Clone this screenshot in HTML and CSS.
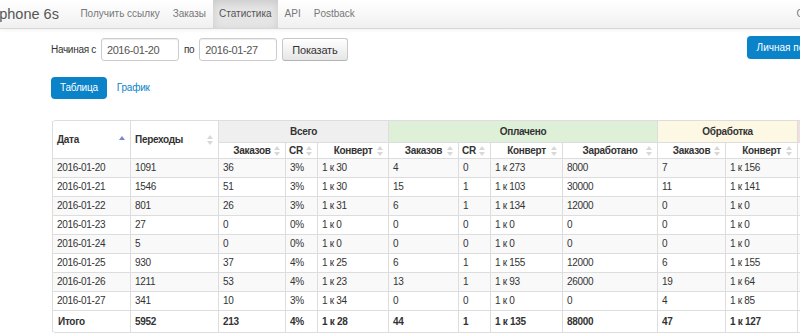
FILE: index.html
```html
<!DOCTYPE html>
<html lang="ru">
<head>
  <meta charset="UTF-8">
  <meta name="viewport" content="width=device-width, initial-scale=1.0">
  <title>Статистика</title>
  <link rel="stylesheet" href="styles.css">
</head>
<body>
  <div class="page">
    <header class="navbar">
      <div class="navbar-inner">
        <a class="brand" href="#">iphone 6s</a>
        <ul class="nav">
          <li><a href="#">Получить ссылку</a></li>
          <li><a href="#">Заказы</a></li>
          <li class="active"><a href="#">Статистика</a></li>
          <li><a href="#">API</a></li>
          <li><a href="#">Postback</a></li>
        </ul>
        <a class="nav-user" href="#">Сергей</a>
      </div>
    </header>

    <main class="content">
      <div class="toolbar">
        <form class="filter">
          <label for="dateFrom">Начиная с</label>
          <input type="text" id="dateFrom" value="2016-01-20">
          <label for="dateTo">по</label>
          <input type="text" id="dateTo" value="2016-01-27">
          <button type="button" class="btn">Показать</button>
        </form>
        <a class="btn-primary cabinet" href="#">Личная подписка</a>
      </div>

      <ul class="tabs">
        <li class="active"><a href="#">Таблица</a></li>
        <li><a href="#">График</a></li>
      </ul>

      <table class="stats">
        <colgroup>
          <col class="w-date"><col class="w-clicks">
          <col class="w-orders"><col class="w-cr"><col class="w-conv">
          <col class="w-orders2"><col class="w-cr"><col class="w-conv2"><col class="w-earned">
          <col class="w-orders3"><col class="w-conv2">
          <col class="w-orders2"><col class="w-conv2">
        </colgroup>
        <thead>
          <tr>
            <th rowspan="2" class="sortable left">Дата
              <svg class="sort" width="6" height="10" viewBox="0 0 6 10"><path class="asc" d="M3 1L6 5H0Z"/></svg>
            </th>
            <th rowspan="2" class="sortable left">Переходы
              <svg class="sort" width="6" height="10" viewBox="0 0 6 10"><path d="M3 0L6 4H0Z"/><path d="M0 6H6L3 10Z"/></svg>
            </th>
            <th colspan="3" class="group group-all">Всего</th>
            <th colspan="4" class="group group-paid">Оплачено</th>
            <th colspan="2" class="group group-wait">Обработка</th>
            <th colspan="2" class="group group-cancel">Отменено</th>
          </tr>
          <tr class="sub">
            <th class="sortable">Заказов<svg class="sort" width="6" height="10" viewBox="0 0 6 10"><path d="M3 0L6 4H0Z"/><path d="M0 6H6L3 10Z"/></svg></th>
            <th class="sortable cr">CR<svg class="sort" width="6" height="10" viewBox="0 0 6 10"><path d="M3 0L6 4H0Z"/><path d="M0 6H6L3 10Z"/></svg></th>
            <th class="sortable">Конверт<svg class="sort" width="6" height="10" viewBox="0 0 6 10"><path d="M3 0L6 4H0Z"/><path d="M0 6H6L3 10Z"/></svg></th>
            <th class="sortable">Заказов<svg class="sort" width="6" height="10" viewBox="0 0 6 10"><path d="M3 0L6 4H0Z"/><path d="M0 6H6L3 10Z"/></svg></th>
            <th class="sortable cr">CR<svg class="sort" width="6" height="10" viewBox="0 0 6 10"><path d="M3 0L6 4H0Z"/><path d="M0 6H6L3 10Z"/></svg></th>
            <th class="sortable">Конверт<svg class="sort" width="6" height="10" viewBox="0 0 6 10"><path d="M3 0L6 4H0Z"/><path d="M0 6H6L3 10Z"/></svg></th>
            <th class="sortable">Заработано<svg class="sort" width="6" height="10" viewBox="0 0 6 10"><path d="M3 0L6 4H0Z"/><path d="M0 6H6L3 10Z"/></svg></th>
            <th class="sortable">Заказов<svg class="sort" width="6" height="10" viewBox="0 0 6 10"><path d="M3 0L6 4H0Z"/><path d="M0 6H6L3 10Z"/></svg></th>
            <th class="sortable">Конверт<svg class="sort" width="6" height="10" viewBox="0 0 6 10"><path d="M3 0L6 4H0Z"/><path d="M0 6H6L3 10Z"/></svg></th>
            <th class="sortable">Заказов<svg class="sort" width="6" height="10" viewBox="0 0 6 10"><path d="M3 0L6 4H0Z"/><path d="M0 6H6L3 10Z"/></svg></th>
            <th class="sortable">Конверт<svg class="sort" width="6" height="10" viewBox="0 0 6 10"><path d="M3 0L6 4H0Z"/><path d="M0 6H6L3 10Z"/></svg></th>
          </tr>
        </thead>
        <tbody>
          <tr><td>2016-01-20</td><td>1091</td><td>36</td><td>3%</td><td>1 к 30</td><td>4</td><td>0</td><td>1 к 273</td><td>8000</td><td>7</td><td>1 к 156</td><td>25</td><td>1 к 44</td></tr>
          <tr><td>2016-01-21</td><td>1546</td><td>51</td><td>3%</td><td>1 к 30</td><td>15</td><td>1</td><td>1 к 103</td><td>30000</td><td>11</td><td>1 к 141</td><td>25</td><td>1 к 62</td></tr>
          <tr><td>2016-01-22</td><td>801</td><td>26</td><td>3%</td><td>1 к 31</td><td>6</td><td>1</td><td>1 к 134</td><td>12000</td><td>0</td><td>1 к 0</td><td>20</td><td>1 к 40</td></tr>
          <tr><td>2016-01-23</td><td>27</td><td>0</td><td>0%</td><td>1 к 0</td><td>0</td><td>0</td><td>1 к 0</td><td>0</td><td>0</td><td>1 к 0</td><td>0</td><td>1 к 0</td></tr>
          <tr><td>2016-01-24</td><td>5</td><td>0</td><td>0%</td><td>1 к 0</td><td>0</td><td>0</td><td>1 к 0</td><td>0</td><td>0</td><td>1 к 0</td><td>0</td><td>1 к 0</td></tr>
          <tr><td>2016-01-25</td><td>930</td><td>37</td><td>4%</td><td>1 к 25</td><td>6</td><td>1</td><td>1 к 155</td><td>12000</td><td>6</td><td>1 к 155</td><td>25</td><td>1 к 37</td></tr>
          <tr><td>2016-01-26</td><td>1211</td><td>53</td><td>4%</td><td>1 к 23</td><td>13</td><td>1</td><td>1 к 93</td><td>26000</td><td>19</td><td>1 к 64</td><td>21</td><td>1 к 58</td></tr>
          <tr><td>2016-01-27</td><td>341</td><td>10</td><td>3%</td><td>1 к 34</td><td>0</td><td>0</td><td>1 к 0</td><td>0</td><td>4</td><td>1 к 85</td><td>6</td><td>1 к 57</td></tr>
        </tbody>
        <tfoot>
          <tr><td>Итого</td><td>5952</td><td>213</td><td>4%</td><td>1 к 28</td><td>44</td><td>1</td><td>1 к 135</td><td>88000</td><td>47</td><td>1 к 127</td><td>122</td><td>1 к 49</td></tr>
        </tfoot>
      </table>
    </main>
  </div>
</body>
</html>
```

FILE: styles.css
```css
/* Reset and global styles */
* {
  margin: 0;
  padding: 0;
  box-sizing: border-box;
}
body {
  font-family: 'Liberation Sans', Arial, sans-serif;
  font-size: 10px;
  color: #333;
  background: #fff;
  width: 800px;
  height: 335px;
  overflow: hidden;
}
a {
  text-decoration: none;
}
ul {
  list-style: none;
}
.page {
  width: 1000px;
}

/* Navbar */
.navbar {
  height: 29px;
  background: linear-gradient(180deg, #ffffff, #f0f0f0);
  border-bottom: 1px solid #d6d6d6;
  box-shadow: 0 1px 4px rgba(0, 0, 0, 0.06);
}
.navbar-inner {
  display: flex;
  width: 836px;
  height: 28px;
}
.brand {
  margin-left: -4px;
  padding-right: 15px;
  font-size: 14.5px;
  line-height: 28px;
  color: #555;
}
.nav {
  display: flex;
}
.nav a,
.nav-user {
  display: block;
  padding: 0 6.5px;
  line-height: 28px;
  color: #777;
}
.nav .active a {
  background: #e5e5e5;
  color: #555;
  box-shadow: inset 0 3px 8px rgba(0, 0, 0, 0.12);
}
.nav-user {
  margin-left: auto;
}

/* Filter toolbar */
.content {
  padding-left: 51px;
  width: 846px;
}
.toolbar {
  display: flex;
  align-items: flex-start;
  margin-top: 7px;
}
.filter {
  display: flex;
  align-items: center;
  gap: 5px;
  margin-top: 2px;
}
.filter label {
  font-size: 10px;
  letter-spacing: -0.3px;
  color: #333;
}
.filter input {
  width: 78px;
  height: 23px;
  padding: 0 5px;
  border: 1px solid #ccc;
  border-radius: 3px;
  box-shadow: inset 0 1px 1px rgba(0, 0, 0, 0.075);
  font-family: inherit;
  font-size: 11px;
  letter-spacing: -0.4px;
  color: #555;
}
.btn {
  height: 23px;
  padding: 0 9px;
  border: 1px solid #c8c8c8;
  border-bottom-color: #b3b3b3;
  border-radius: 3px;
  background: linear-gradient(180deg, #ffffff, #e6e6e6);
  font-family: inherit;
  font-size: 11px;
  letter-spacing: -0.2px;
  color: #333;
}
.btn-primary {
  background: #0a83c9;
  color: #fff;
  border-radius: 4px;
}
.cabinet {
  margin-left: auto;
  height: 23px;
  padding: 0 10px;
  line-height: 23px;
  font-size: 10px;
}

/* Tabs */
.tabs {
  display: flex;
  gap: 1px;
  margin-top: 16px;
}
.tabs a {
  display: block;
  height: 22px;
  padding: 0 9px;
  line-height: 22px;
  border-radius: 4px;
  color: #0a83c9;
  font-size: 10px;
  letter-spacing: -0.2px;
}
.tabs .active a {
  background: #0a83c9;
  color: #fff;
}

/* Stats table */
.stats {
  margin-top: 21px;
  margin-left: 1px;
  width: 888px;
  table-layout: fixed;
  border-collapse: separate;
  border-spacing: 0;
  border: 1px solid #ddd;
  border-left: 0;
  border-radius: 4px;
  font-size: 10px;
  letter-spacing: -0.3px;
}
.w-date { width: 78px; }
.w-clicks { width: 88px; }
.w-orders { width: 67px; }
.w-cr { width: 32px; }
.w-conv { width: 71px; }
.w-orders2 { width: 70px; }
.w-conv2 { width: 72px; }
.w-earned { width: 95px; }
.w-orders3 { width: 68px; }

.stats th,
.stats td {
  border-left: 1px solid #ddd;
  border-top: 1px solid #ddd;
  line-height: 13px;
  text-align: left;
  white-space: nowrap;
  overflow: hidden;
}
.stats thead tr:first-child th {
  border-top: 0;
}
.stats th {
  position: relative;
  padding: 4px 4px;
  font-weight: bold;
  text-align: center;
}
.stats th.left {
  text-align: left;
}
.stats tr.sub th {
  padding: 1px 4px;
}
.stats tr.sub th.cr {
  text-align: left;
  padding-left: 3px;
}
.stats .group-all { background: #efefef; }
.stats .group-paid { background: #dff0d8; }
.stats .group-wait { background: #fcf8e3; }
.stats .group-cancel { background: #f2dede; }

.sort {
  position: absolute;
  right: 5px;
  top: 50%;
  margin-top: -5px;
  fill: #d8d8d8;
}
.sort .asc {
  fill: #7b86c8;
}

.stats td {
  padding: 2px 4px 3px;
}
.stats tbody tr:nth-child(odd) td {
  background: #f9f9f9;
}
.stats tfoot td {
  padding: 4px 4px;
  font-weight: bold;
}
.stats tfoot td:first-child {
  padding-left: 5px;
}
```
